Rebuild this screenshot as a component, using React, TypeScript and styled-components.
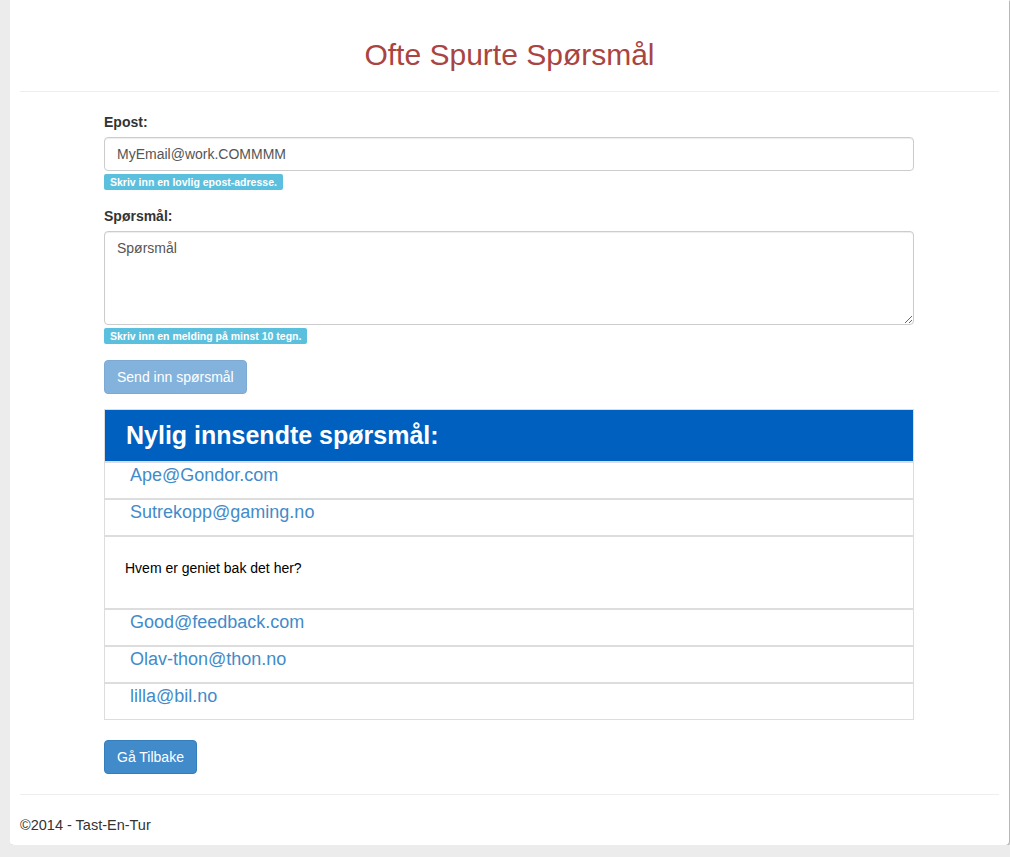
import React from "react";
import styled, { createGlobalStyle } from "styled-components";

const GlobalStyle = createGlobalStyle`
  html, body {
    margin: 0;
    padding: 0;
    background: #ececec;
    font-family: "Liberation Sans", Arial, sans-serif;
    font-size: 14px;
    line-height: 20px;
    color: #333;
  }
  * {
    box-sizing: border-box;
  }
`;

const Card = styled.div`
  margin-left: 10px;
  width: 999px;
  background: #fff;
  border-radius: 0 0 4px 4px;
  box-shadow: 1px 1px 1px rgba(0, 0, 0, 0.25);
  padding: 38px 10px 10px;
`;

const Title = styled.h2`
  margin: 0;
  font-size: 30px;
  line-height: 33px;
  font-weight: 400;
  color: #a94442;
  text-align: center;
`;

const Rule = styled.hr`
  margin: 20px 0;
  border: 0;
  border-top: 1px solid #eee;
`;

const Content = styled.div`
  width: 810px;
  margin-left: 84px;
`;

const FormGroup = styled.div`
  margin-bottom: 16px;
`;

const Label = styled.label`
  display: block;
  font-weight: 700;
  margin-bottom: 5px;
`;

const TextInput = styled.input`
  display: block;
  width: 100%;
  height: 34px;
  padding: 6px 12px;
  font-family: inherit;
  font-size: 14px;
  color: #555;
  border: 1px solid #ccc;
  border-radius: 4px;
  box-shadow: inset 0 1px 1px rgba(0, 0, 0, 0.075);
  outline: none;
`;

const TextArea = styled.textarea`
  display: block;
  width: 100%;
  height: 94px;
  padding: 6px 12px;
  font-family: inherit;
  font-size: 14px;
  line-height: 20px;
  color: #555;
  border: 1px solid #ccc;
  border-radius: 4px;
  box-shadow: inset 0 1px 1px rgba(0, 0, 0, 0.075);
  outline: none;
  &::placeholder {
    color: #555;
  }
`;

const Hint = styled.span`
  display: block;
  width: fit-content;
  margin-top: 3px;
  height: 16px;
  padding: 0 6px;
  font-size: 10.5px;
  line-height: 16px;
  font-weight: 700;
  color: #fff;
  background: #5bc0de;
  border-radius: 2px;
`;

const Button = styled.button<{ $disabled?: boolean }>`
  display: block;
  height: 34px;
  padding: 6px 12px;
  font-family: inherit;
  font-size: 14px;
  line-height: 20px;
  color: #fff;
  background: #428bca;
  border: 1px solid #357ebd;
  border-radius: 4px;
  opacity: ${(p) => (p.$disabled ? 0.65 : 1)};
  cursor: ${(p) => (p.$disabled ? "not-allowed" : "pointer")};
`;

const Panel = styled.div`
  margin-top: 15px;
  border: 1px solid #ddd;
`;

const PanelHead = styled.div`
  height: 51px;
  padding: 0 21px;
  background: #0060bf;
  color: #fff;
  font-size: 25px;
  font-weight: 700;
  line-height: 51px;
`;

const EmailRow = styled.div`
  height: 37px;
  border-top: 2px solid #ddd;
  padding: 2px 25px 0;
  font-size: 18px;
  line-height: 20px;
  a {
    color: #428bca;
    text-decoration: none;
  }
`;

const QuestionRow = styled.div`
  height: 73px;
  border-top: 2px solid #ddd;
  padding: 21px 20px 0;
  color: #000;
`;

const BackRow = styled.div`
  margin-top: 20px;
`;

const Footer = styled.footer`
  height: 20px;
  line-height: 20px;
  font-size: 14.5px;
`;

const entries = [
  { email: "Ape@Gondor.com" },
  { email: "Sutrekopp@gaming.no" },
  { question: "Hvem er geniet bak det her?" },
  { email: "Good@feedback.com" },
  { email: "Olav-thon@thon.no" },
  { email: "lilla@bil.no" },
];

export default function App() {
  return (
    <>
      <GlobalStyle />
      <Card>
        <Title>Ofte Spurte Spørsmål</Title>
        <Rule />
        <Content>
          <FormGroup>
            <Label>Epost:</Label>
            <TextInput defaultValue="MyEmail@work.COMMMM" />
            <Hint>Skriv inn en lovlig epost-adresse.</Hint>
          </FormGroup>
          <FormGroup>
            <Label>Spørsmål:</Label>
            <TextArea placeholder="Spørsmål" />
            <Hint>Skriv inn en melding på minst 10 tegn.</Hint>
          </FormGroup>
          <Button $disabled>Send inn spørsmål</Button>
          <Panel>
            <PanelHead>Nylig innsendte spørsmål:</PanelHead>
            {entries.map((e, i) =>
              e.email ? (
                <EmailRow key={i}>
                  <a href="#">{e.email}</a>
                </EmailRow>
              ) : (
                <QuestionRow key={i}>{e.question}</QuestionRow>
              ),
            )}
          </Panel>
          <BackRow>
            <Button>Gå Tilbake</Button>
          </BackRow>
        </Content>
        <Rule />
        <Footer>©2014 - Tast-En-Tur</Footer>
      </Card>
    </>
  );
}
